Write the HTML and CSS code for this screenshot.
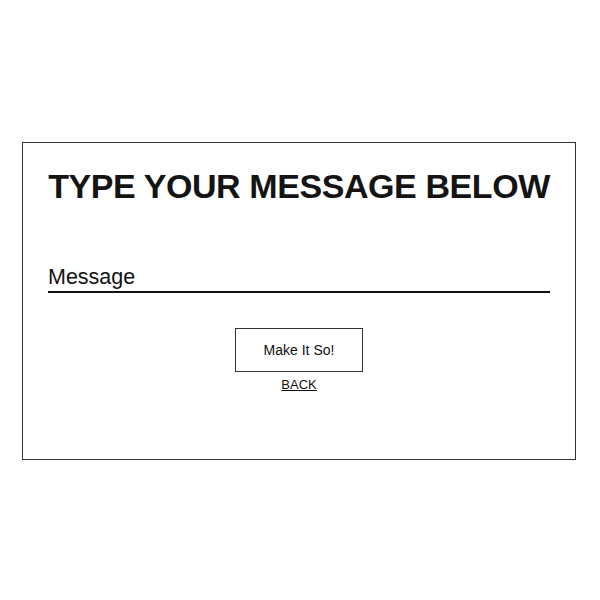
FILE: index.html
```html
<!DOCTYPE html>
<html>
<head>
<meta charset="utf-8">
<link rel="stylesheet" href="styles.css">
</head>
<body>
<div class="page">
  <form class="card">
    <h1 class="title">TYPE YOUR MESSAGE BELOW</h1>
    <label class="field">
      <input class="input" type="text" placeholder="Message">
    </label>
    <div class="actions">
      <button class="btn" type="button">Make It So!</button>
      <a class="back" href="#">BACK</a>
    </div>
  </form>
</div>
</body>
</html>
```
FILE: styles.css
```css
html, body {
  margin: 0;
  padding: 0;
  background: #fff;
}
body {
  font-family: "Liberation Sans", Arial, sans-serif;
  color: #111;
}
.page {
  height: 600px;
  display: flex;
  align-items: center;
  justify-content: center;
}
.card {
  box-sizing: border-box;
  width: 554px;
  height: 318px;
  border: 1px solid #333;
  padding: 23px 25px 0 25px;
  display: flex;
  flex-direction: column;
  margin-top: 2px;
  margin-right: 2px;
}
.title {
  margin: 0;
  font-size: 34px;
  font-weight: bold;
  line-height: 40px;
  text-align: center;
  white-space: nowrap;
  color: #141414;
  letter-spacing: -0.42px;
}
.field {
  display: block;
  margin-top: 59px;
}
.input {
  display: block;
  box-sizing: border-box;
  width: 100%;
  border: 0;
  border-bottom: 2px solid #111;
  padding: 0 0 2px 0;
  font-family: "Liberation Sans", Arial, sans-serif;
  font-size: 21.5px;
  line-height: 24px;
  height: 28px;
  outline: none;
  background: transparent;
}
.input::placeholder {
  color: #111;
  opacity: 1;
}
.actions {
  display: flex;
  flex-direction: column;
  align-items: center;
  margin-top: 35px;
}
.btn {
  box-sizing: border-box;
  width: 128px;
  height: 44px;
  border: 1px solid #333;
  background: #fff;
  font-family: "Liberation Sans", Arial, sans-serif;
  font-size: 14px;
  color: #111;
  padding: 0;
}
.back {
  margin-top: 5px;
  font-size: 13px;
  color: #111;
  text-decoration: underline;
}
```
